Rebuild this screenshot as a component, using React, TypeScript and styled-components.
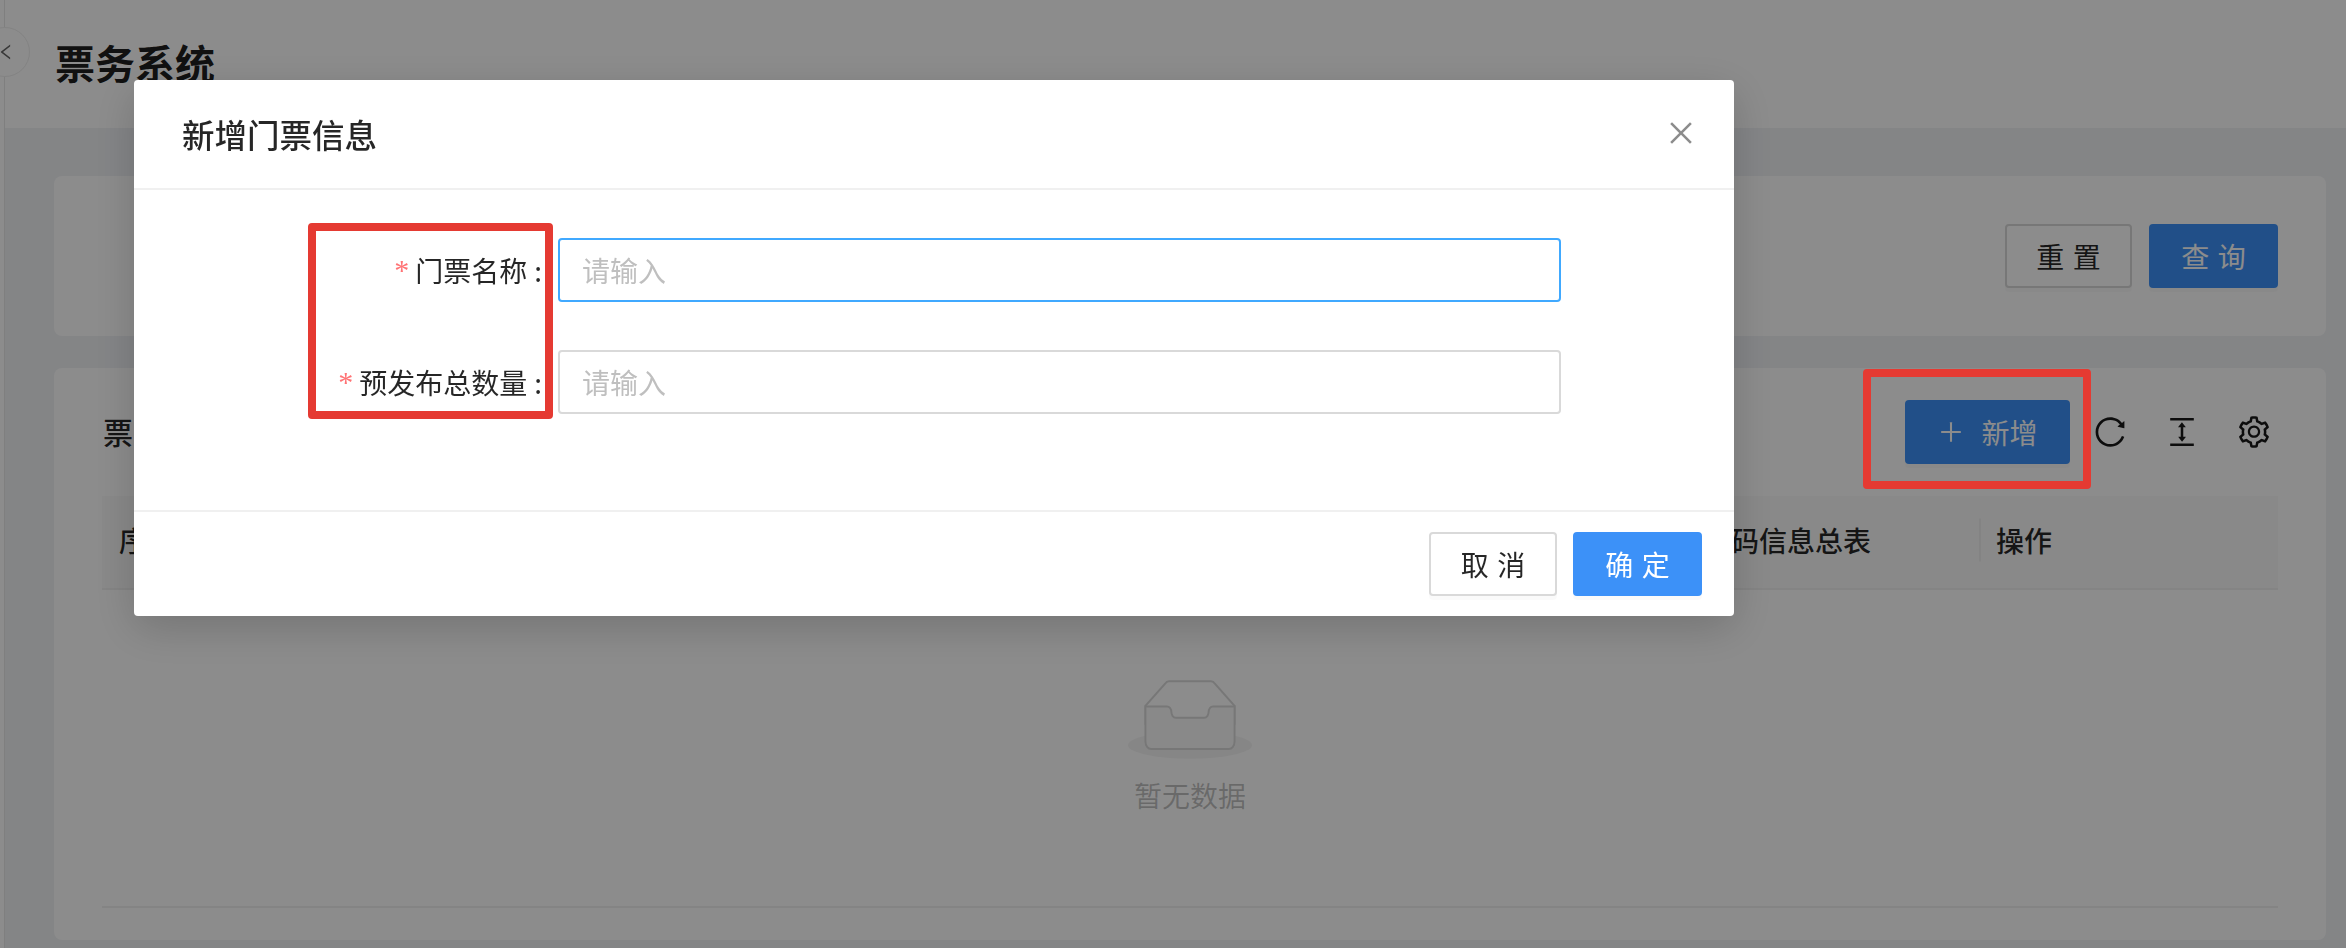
import React from "react";
import styled, { createGlobalStyle } from "styled-components";
import {
    AiOutlineClose,
    AiOutlineColumnHeight,
    AiOutlineLeft,
    AiOutlinePlus,
    AiOutlineReload,
    AiOutlineSetting,
} from "react-icons/ai";

const GlobalStyle = createGlobalStyle`
    html, body {
        margin: 0;
        padding: 0;
        width: 2346px;
        height: 948px;
        overflow: hidden;
        background-color: #f0f2f5;
        font-family: "Noto Sans CJK SC", "Noto Sans", sans-serif;
        color: rgba(0, 0, 0, 0.85);
    }

    * {
        box-sizing: border-box;
    }
`;

const Shell = styled.div`
    display: flex;
    width: 2346px;
    height: 948px;
`;

const SideRail = styled.div`
    position: relative;
    flex: 0 0 5px;
    background-color: #fff;
    border-right: 1px solid #e8e8e8;
`;

const CollapseHandle = styled.div`
    position: absolute;
    left: -20px;
    top: 27px;
    width: 50px;
    height: 50px;
    border-radius: 50%;
    background-color: #fff;
    border: 1px solid #eee;
    display: flex;
    align-items: center;
    justify-content: flex-end;
    padding-right: 13px;
    color: #666;
    font-size: 20px;

    svg {
        flex: none;
    }
`;

const Main = styled.div`
    flex: 1;
    display: flex;
    flex-direction: column;
    min-width: 0;
`;

const PageHeader = styled.header`
    height: 128px;
    flex: none;
    background-color: #fff;
    padding: 39px 0 0 50px;
`;

const PageTitle = styled.h1`
    margin: 0;
    font-size: 40px;
    line-height: 46px;
    font-weight: 700;
    color: rgba(0, 0, 0, 0.9);
`;

const Content = styled.main`
    flex: 1;
    display: flex;
    flex-direction: column;
    gap: 32px;
    padding: 48px 20px 8px 49px;
    min-height: 0;
`;

const SearchCard = styled.section`
    height: 160px;
    flex: none;
    background-color: #fff;
    border-radius: 8px;
    padding: 0 48px;
    display: flex;
    align-items: center;
    justify-content: flex-end;
    gap: 17px;
`;

const ListCard = styled.section`
    flex: 1;
    display: flex;
    flex-direction: column;
    background-color: #fff;
    border-radius: 8px;
    padding: 0 48px 32px;
    min-height: 0;
`;

const ListHead = styled.div`
    height: 128px;
    flex: none;
    display: flex;
    align-items: center;
    justify-content: space-between;
`;

const ListTitle = styled.h2`
    margin: 0 0 2px 1px;
    font-size: 30px;
    font-weight: 500;
`;

const Toolbar = styled.div`
    display: flex;
    align-items: center;
    padding-right: 6px;
`;

const Button = styled.button<{ $primary?: boolean; $width: number }>`
    width: ${(p) => p.$width}px;
    height: 64px;
    flex: none;
    display: flex;
    align-items: center;
    justify-content: center;
    border-radius: 4px;
    border: 2px solid ${(p) => (p.$primary ? "#3c91f8" : "#d9d9d9")};
    background-color: ${(p) => (p.$primary ? "#3c91f8" : "#fff")};
    color: ${(p) => (p.$primary ? "#fff" : "rgba(0, 0, 0, 0.85)")};
    box-shadow: 0 4px 0 rgba(0, 0, 0, 0.02);
    font-family: inherit;
    font-size: 28px;
    padding: 0;
`;

const SpacedLabel = styled.span`
    letter-spacing: 0.3em;
    margin-right: -0.3em;
`;

const AddSlot = styled.div`
    position: relative;
    margin-right: 22px;
`;

const AddLabel = styled.span`
    margin-left: 16px;
`;

const ToolIcons = styled.div`
    display: flex;
    gap: 36px;
    font-size: 36px;
    color: rgba(0, 0, 0, 0.9);

    svg {
        display: block;
    }
`;

// red annotations drawn on top of the screenshot, above the modal mask too
const Annotation = styled.div<{ $left: number; $top: number; $width: number; $height: number }>`
    position: absolute;
    left: ${(p) => p.$left}px;
    top: ${(p) => p.$top}px;
    width: ${(p) => p.$width}px;
    height: ${(p) => p.$height}px;
    border: 8px solid #e53a32;
    border-radius: 4px;
    z-index: 20;
    pointer-events: none;
`;

const TableHeadRow = styled.div`
    flex: none;
    height: 94px;
    display: grid;
    grid-template-columns: 1556px 321px 1fr;
    align-items: center;
    padding-bottom: 4px;
    background-color: #fafafa;
    border-bottom: 2px solid #f0f0f0;
    font-size: 28px;
    font-weight: 500;
`;

const HeadCell = styled.div<{ $divided?: boolean }>`
    position: relative;
    padding-left: 17px;

    &::before {
        content: "";
        display: ${(p) => (p.$divided ? "block" : "none")};
        position: absolute;
        left: 0;
        top: 50%;
        transform: translateY(-50%);
        width: 2px;
        height: 43px;
        background-color: #eee;
    }
`;

const TableBody = styled.div`
    flex: 1;
    display: flex;
    flex-direction: column;
    align-items: center;
    padding-top: 89px;
    border-bottom: 2px solid #f0f0f0;
`;

const EmptyText = styled.div`
    margin-top: 14px;
    font-size: 28px;
    line-height: 44px;
    color: rgba(0, 0, 0, 0.25);
`;

const Mask = styled.div`
    position: fixed;
    inset: 0;
    z-index: 10;
    background-color: rgba(0, 0, 0, 0.45);
    padding: 80px 0 0 134px;
`;

const Modal = styled.div`
    width: 1600px;
    height: 536px;
    display: flex;
    flex-direction: column;
    background-color: #fff;
    border-radius: 4px;
    box-shadow: 0 12px 44px rgba(0, 0, 0, 0.18);
`;

const ModalHead = styled.div`
    height: 110px;
    flex: none;
    display: flex;
    align-items: center;
    justify-content: space-between;
    padding: 0 37px 2px 48px;
    border-bottom: 2px solid #f0f0f0;
`;

const ModalTitle = styled.div`
    font-size: 32.5px;
    font-weight: 500;
`;

const CloseButton = styled.span`
    display: flex;
    font-size: 32px;
    color: rgba(0, 0, 0, 0.45);
`;

const Form = styled.form`
    position: relative;
    flex: 1;
    display: flex;
    flex-direction: column;
    gap: 48px;
    padding-top: 48px;
`;

const FormRow = styled.div`
    display: flex;
    align-items: center;
`;

const FieldLabel = styled.label`
    width: 424px;
    flex: none;
    display: flex;
    justify-content: flex-end;
    align-items: center;
    padding-right: 16px;
    font-size: 28px;
    color: rgba(0, 0, 0, 0.85);
`;

const RequiredMark = styled.span`
    color: #ff7375;
    font-family: "Liberation Serif", serif;
    font-size: 30px;
    line-height: 1;
    margin-right: 6px;
`;

const Colon = styled.span`
    margin-left: 7px;
`;

const TextInput = styled.input<{ $focused?: boolean }>`
    width: 1003px;
    height: 64px;
    padding: 0 22px;
    border: 2px solid ${(p) => (p.$focused ? "#40a9ff" : "#d9d9d9")};
    border-radius: 4px;
    background-color: #fff;
    font-family: inherit;
    font-size: 28px;
    outline: none;

    &::placeholder {
        color: #bfbfbf;
    }
`;

const ModalFoot = styled.div`
    height: 106px;
    flex: none;
    display: flex;
    justify-content: flex-end;
    align-items: center;
    gap: 16px;
    padding: 0 32px 0 0;
    border-top: 2px solid #f0f0f0;
`;

const EmptyIcon = () => (
    <svg width="124" height="80" viewBox="0 0 64 41" style={{ display: "block" }}>
        <g transform="translate(0 1)" fill="none" fillRule="evenodd">
            <ellipse fill="#f5f5f5" cx="32" cy="33" rx="32" ry="7" />
            <g fillRule="nonzero" stroke="#d9d9d9">
                <path d="M55 12.76L44.854 1.258C44.367.474 43.656 0 42.907 0H21.093c-.749 0-1.46.474-1.947 1.257L9 12.761V22h46v-9.24z" />
                <path
                    d="M41.613 15.931c0-1.605.994-2.93 2.227-2.931H55v18.137C55 33.26 53.68 35 52.05 35h-40.1C10.32 35 9 33.259 9 31.137V13h11.16c1.233 0 2.227 1.323 2.227 2.928v.022c0 1.605 1.005 2.901 2.237 2.901h14.752c1.232 0 2.237-1.308 2.237-2.913v-.007z"
                    fill="#fafafa"
                />
            </g>
        </g>
    </svg>
);

const App: React.FC = () => {
    return (
        <>
            <GlobalStyle />
            <Shell>
                <SideRail>
                    <CollapseHandle>
                        <AiOutlineLeft />
                    </CollapseHandle>
                </SideRail>
                <Main>
                    <PageHeader>
                        <PageTitle>票务系统</PageTitle>
                    </PageHeader>
                    <Content>
                        <SearchCard>
                            <Button $width={127}>
                                <SpacedLabel>重置</SpacedLabel>
                            </Button>
                            <Button $primary $width={129}>
                                <SpacedLabel>查询</SpacedLabel>
                            </Button>
                        </SearchCard>
                        <ListCard>
                            <ListHead>
                                <ListTitle>票务列表</ListTitle>
                                <Toolbar>
                                    <AddSlot>
                                        <Button $primary $width={165}>
                                            <AiOutlinePlus size={28} />
                                            <AddLabel>新增</AddLabel>
                                        </Button>
                                        <Annotation $left={-42} $top={-31} $width={228} $height={120} />
                                    </AddSlot>
                                    <ToolIcons>
                                        <AiOutlineReload />
                                        <AiOutlineColumnHeight />
                                        <AiOutlineSetting />
                                    </ToolIcons>
                                </Toolbar>
                            </ListHead>
                            <TableHeadRow>
                                <HeadCell>序号</HeadCell>
                                <HeadCell>二维码信息总表</HeadCell>
                                <HeadCell $divided>操作</HeadCell>
                            </TableHeadRow>
                            <TableBody>
                                <EmptyIcon />
                                <EmptyText>暂无数据</EmptyText>
                            </TableBody>
                        </ListCard>
                    </Content>
                </Main>
            </Shell>
            <Mask>
                <Modal>
                    <ModalHead>
                        <ModalTitle>新增门票信息</ModalTitle>
                        <CloseButton>
                            <AiOutlineClose />
                        </CloseButton>
                    </ModalHead>
                    <Form>
                        <FormRow>
                            <FieldLabel>
                                <RequiredMark>*</RequiredMark>门票名称<Colon>:</Colon>
                            </FieldLabel>
                            <TextInput $focused placeholder="请输入" />
                        </FormRow>
                        <FormRow>
                            <FieldLabel>
                                <RequiredMark>*</RequiredMark>预发布总数量<Colon>:</Colon>
                            </FieldLabel>
                            <TextInput placeholder="请输入" />
                        </FormRow>
                        <Annotation $left={174} $top={33} $width={245} $height={196} />
                    </Form>
                    <ModalFoot>
                        <Button $width={128}>
                            <SpacedLabel>取消</SpacedLabel>
                        </Button>
                        <Button $primary $width={129}>
                            <SpacedLabel>确定</SpacedLabel>
                        </Button>
                    </ModalFoot>
                </Modal>
            </Mask>
        </>
    );
};

export default App;
